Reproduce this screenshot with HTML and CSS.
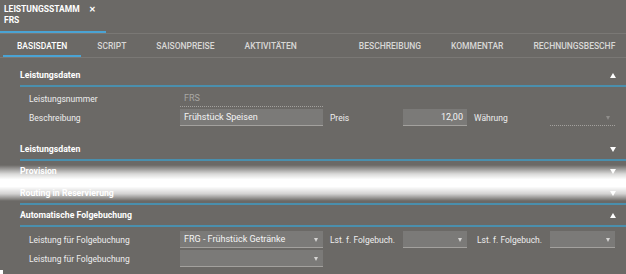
FILE: index.html
```html
<!DOCTYPE html>
<html lang="de">
<head>
  <meta charset="UTF-8">
  <title>Leistungsstamm</title>
  <link rel="stylesheet" href="styles.css">
</head>
<body>
  <div class="page">
    <div class="title-bar">
      <div class="title-row">
        <span>LEISTUNGSSTAMM</span>
        <span class="close">&#10005;</span>
      </div>
      <div class="title-sub">FRS</div>
      <div class="title-line"></div>
    </div>

    <div class="tabs">
      <div class="tab active">BASISDATEN</div>
      <div class="tab">SCRIPT</div>
      <div class="tab">SAISONPREISE</div>
      <div class="tab">AKTIVITÄTEN</div>
      <div class="tab spaced">BESCHREIBUNG</div>
      <div class="tab">KOMMENTAR</div>
      <div class="tab last">RECHNUNGSBESCHF</div>
    </div>

    <div class="section first">
      <div class="section-head">Leistungsdaten <span class="arrow up"></span></div>
      <div class="form-row">
        <div class="label">Leistungsnummer</div>
        <div class="field readonly">FRS</div>
      </div>
      <div class="form-row">
        <div class="label">Beschreibung</div>
        <div class="field">Frühstück Speisen</div>
        <div class="label side">Preis</div>
        <div class="field number">12,00</div>
        <div class="label side">Währung</div>
        <div class="field select empty"><span class="caret"></span></div>
      </div>
    </div>

    <div class="section">
      <div class="section-head">Leistungsdaten <span class="arrow down"></span></div>
    </div>
    <div class="section">
      <div class="section-head">Provision <span class="arrow down"></span></div>
    </div>
    <div class="section">
      <div class="section-head">Routing in Reservierung <span class="arrow down"></span></div>
    </div>

    <div class="section">
      <div class="section-head">Automatische Folgebuchung <span class="arrow up"></span></div>
      <div class="form-row tight">
        <div class="label">Leistung für Folgebuchung</div>
        <div class="field select">FRG - Frühstück Getränke<span class="caret"></span></div>
        <div class="label side">Lst. f. Folgebuch.</div>
        <div class="field select"><span class="caret"></span></div>
        <div class="label side wide">Lst. f. Folgebuch.</div>
        <div class="field select"><span class="caret"></span></div>
      </div>
      <div class="form-row">
        <div class="label">Leistung für Folgebuchung</div>
        <div class="field select"><span class="caret"></span></div>
      </div>
    </div>

    <div class="glare"></div>
    <div class="corner-box"></div>
  </div>
</body>
</html>
```

FILE: styles.css
```css
html, body {
  margin: 0;
  padding: 0;
  height: 100%;
  background-color: #6b6966;
  font-family: Roboto, "Liberation Sans", sans-serif;
  color: #eeeeee;
  overflow: hidden;
}
.page {
  position: relative;
  height: 274px;
}
.title-bar {
  height: 34px;
  padding: 4px 0 0 4px;
  box-sizing: border-box;
  position: relative;
  font-size: 8.5px;
  font-weight: 700;
  color: #ffffff;
  border-bottom: 1px solid #7a7875;
}
.title-row {
  display: flex;
  gap: 9px;
  height: 11px;
  line-height: 11px;
}
.close {
  font-size: 8px;
}
.title-sub {
  line-height: 11px;
  margin-top: 0;
}
.title-line {
  position: absolute;
  left: 0;
  bottom: 0;
  width: 106px;
  height: 2px;
  background-color: #4aa3d4;
}
.tabs {
  display: flex;
  height: 23px;
  padding-left: 3px;
  border-bottom: 1px solid #7a7875;
  white-space: nowrap;
  overflow: hidden;
}
.tab {
  padding: 1px 14px 0 14px;
  margin-right: 2px;
  font-size: 8.5px;
  font-weight: 500;
  line-height: 22px;
  color: #d9d8d6;
  box-sizing: border-box;
}
.tab.active {
  color: #ffffff;
  border-bottom: 2px solid #4aa3d4;
}
.tab.spaced {
  margin-left: 32px;
}
.tab.last {
  padding-right: 0;
}
.section {
  margin-left: 20px;
}
.section.first {
  margin-top: 7px;
}
.section-head {
  display: flex;
  align-items: center;
  justify-content: space-between;
  height: 20px;
  padding-right: 10px;
  font-size: 8.7px;
  font-weight: 700;
  color: #ffffff;
  border-bottom: 2px solid #4a8fad;
}
.arrow {
  width: 0;
  height: 0;
  border-left: 3px solid transparent;
  border-right: 3px solid transparent;
}
.arrow.up {
  border-bottom: 5px solid #ffffff;
}
.arrow.down {
  border-top: 5px solid #ffffff;
}
.section.first .section-head + .form-row {
  margin-top: 2px;
}
.form-row {
  display: grid;
  grid-template-columns: 151px 143px 80px 64px 83px 65px;
  align-items: center;
  height: 19px;
  padding-left: 9px;
  font-size: 8.5px;
}
.section.first .form-row:last-child {
  margin-bottom: 12px;
}
.section-head + .form-row.tight {
  margin-top: 3px;
}
.label {
  color: #eeeeee;
  white-space: nowrap;
}
.label.side {
  padding-left: 7px;
}
.label.side.wide {
  padding-left: 10px;
}
.field {
  position: relative;
  height: 17px;
  line-height: 17px;
  padding: 0 4px;
  box-sizing: border-box;
  background-color: #7b7a78;
  border-bottom: 1px solid #a3a19e;
  font-size: 9px;
  color: #f4f4f4;
  white-space: nowrap;
}
.field.readonly {
  background-color: transparent;
  border-bottom: 1px dotted #a3a19e;
  color: #a9a7a4;
  font-size: 9px;
}
.field.number {
  text-align: right;
}
.field.select.empty {
  background-color: transparent;
  border-bottom: 1px dotted #a3a19e;
}
.field.select.empty .caret {
  border-top-color: #8f8d8a;
}
.caret {
  position: absolute;
  right: 5px;
  top: 7px;
  width: 0;
  height: 0;
  border-left: 2.5px solid transparent;
  border-right: 2.5px solid transparent;
  border-top: 4px solid #d6d5d3;
}
.glare {
  position: absolute;
  left: 0;
  right: 0;
  top: 165px;
  height: 36px;
  pointer-events: none;
  background: linear-gradient(to bottom, rgba(255,255,255,0) 0%, rgba(255,255,255,0.75) 25%, #ffffff 40%, #ffffff 60%, rgba(255,255,255,0.7) 80%, rgba(255,255,255,0) 100%);
}
.corner-box {
  position: absolute;
  left: 0;
  top: 270px;
  width: 3px;
  height: 4px;
  background-color: #ffffff;
}
```
